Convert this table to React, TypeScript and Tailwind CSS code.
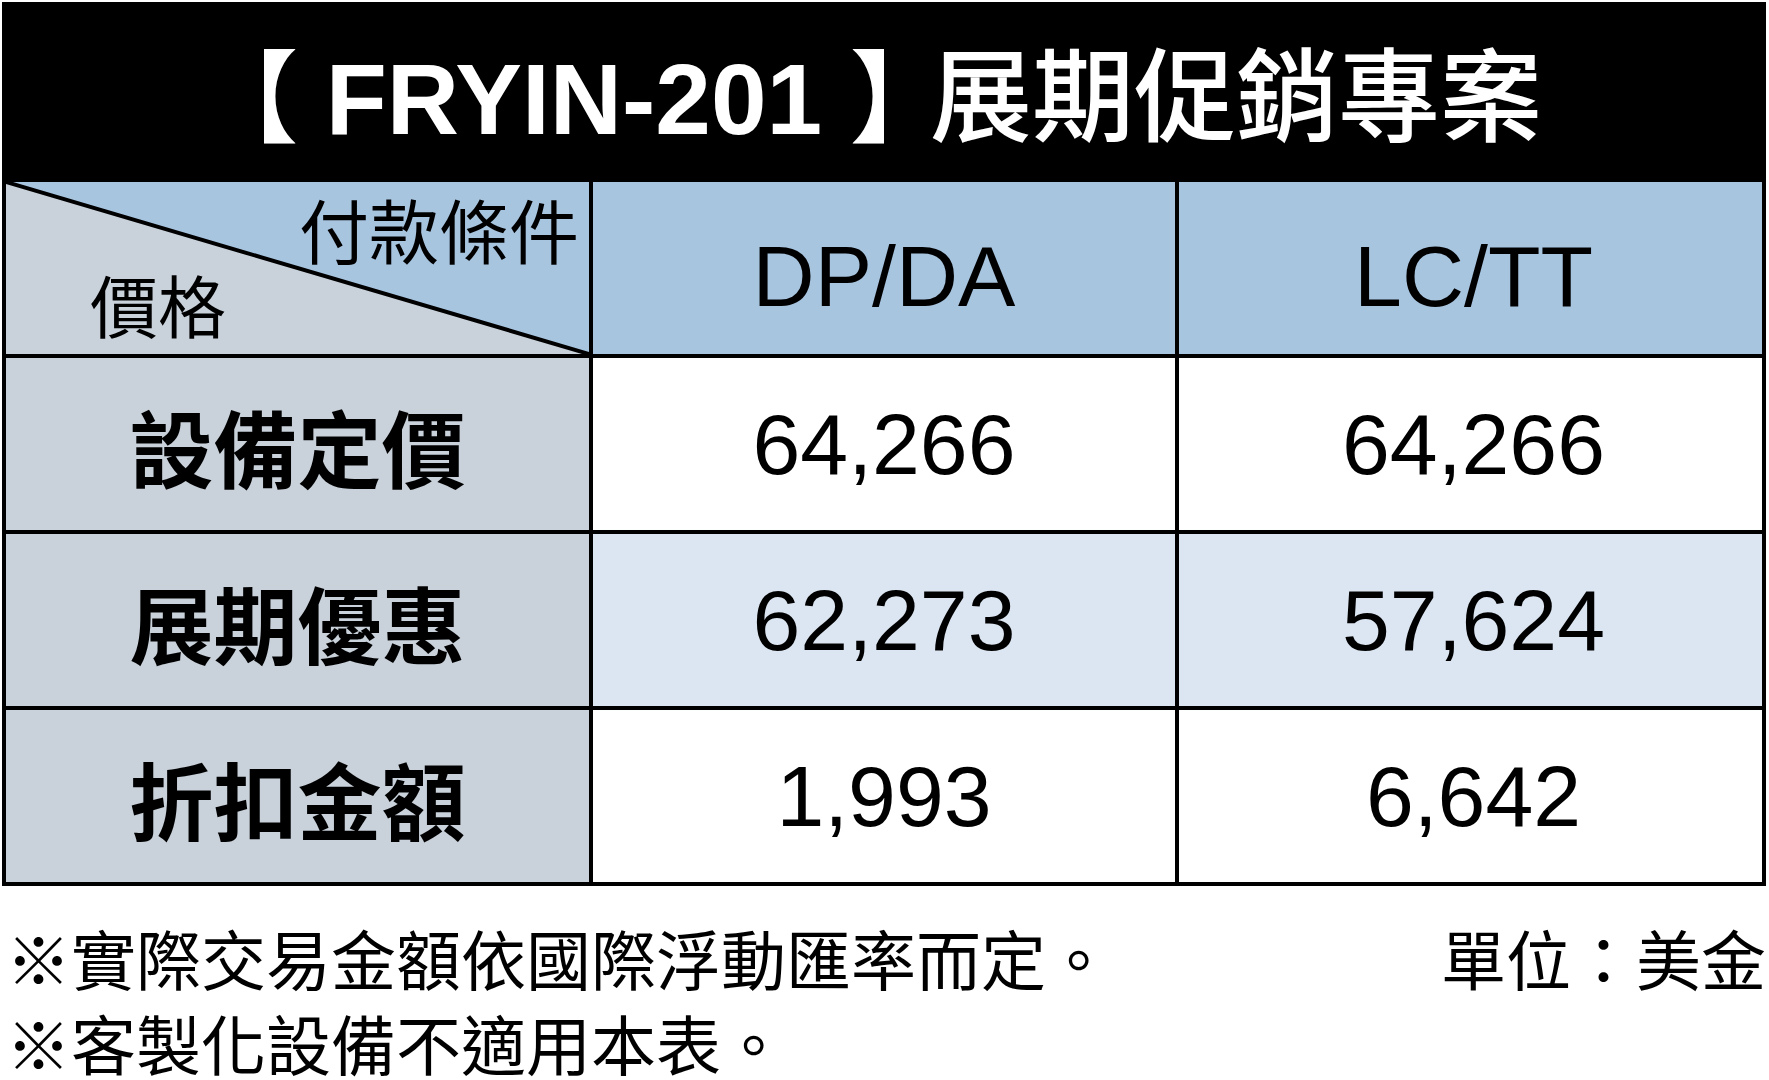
const cjk = "font-[family-name:'Noto_Sans_CJK_TC','Noto_Sans_CJK_SC',sans-serif]";
const arial = "font-[family-name:'Liberation_Sans','Noto_Sans_CJK_TC',sans-serif]";

const rows = [
  { label: '設備定價', dp: '64,266', lc: '64,266', tint: 'bg-white' },
  { label: '展期優惠', dp: '62,273', lc: '57,624', tint: 'bg-[#dce6f2]' },
  { label: '折扣金額', dp: '1,993', lc: '6,642', tint: 'bg-white' },
];

export default function App() {
  return (
    <div className="w-[1769px] h-[1080px] bg-white pt-[2px] pl-[2px] overflow-hidden">
      {/* table */}
      <div className="w-[1764px] border-4 border-black bg-black">
        <div className="h-[176px] flex items-center justify-center pr-[28px]">
          <div className={`text-white text-[100px] leading-none font-bold whitespace-nowrap ${arial}`}>
            <span className={cjk}>【</span>
            <span> FRYIN-201 </span>
            <span className={`${cjk} tracking-[-20px]`}>】</span>
            <span className={`${cjk} font-medium text-[102px]`}>展期促銷專案</span>
          </div>
        </div>

        <div className="grid grid-cols-[583px_582px_583px] grid-rows-[172px_172px_172px_172px] gap-[4px] bg-black">
          {/* corner cell */}
          <div className="relative bg-[#c9d2db]">
            <svg className="absolute inset-0" width="583" height="172" viewBox="0 0 583 172">
              <polygon points="0,0 583,0 583,172" fill="#a8c5e0" />
              <line x1="0" y1="0" x2="583" y2="172" stroke="#000" strokeWidth="4" />
            </svg>
            <div className={`relative flex flex-col h-full text-black leading-none ${cjk}`}>
              <div className="self-end pr-[10px] pt-[12px] text-[70px]">付款條件</div>
              <div className="mt-auto pl-[84px] pb-[16px] text-[68px]">價格</div>
            </div>
          </div>
          <div
            className={`bg-[#a8c5e0] flex items-center justify-center pt-[16px] text-[86px] leading-none text-black ${arial}`}
          >
            DP/DA
          </div>
          <div
            className={`bg-[#a8c5e0] flex items-center justify-center pt-[16px] pl-[6px] text-[86px] leading-none text-black ${arial}`}
          >
            LC/TT
          </div>

          {rows.map((r) => (
            <>
              <div
                key={r.label}
                className={`bg-[#c9d2db] flex items-center justify-center pt-[4px] text-[84px] leading-none font-bold text-black ${cjk}`}
              >
                {r.label}
              </div>
              <div
                className={`${r.tint} flex items-center justify-center text-[86px] leading-none text-black ${arial}`}
              >
                {r.dp}
              </div>
              <div
                className={`${r.tint} flex items-center justify-center pl-[6px] text-[86px] leading-none text-black ${arial}`}
              >
                {r.lc}
              </div>
            </>
          ))}
        </div>
      </div>

      {/* notes */}
      <div className={`mt-[35px] w-[1764px] pl-[4px] flex flex-col gap-[13px] text-[65px] leading-[72px] text-black ${cjk}`}>
        <div className="flex justify-between">
          <span>※實際交易金額依國際浮動匯率而定。</span>
          <span>單位：美金</span>
        </div>
        <div>※客製化設備不適用本表。</div>
      </div>
    </div>
  );
}
